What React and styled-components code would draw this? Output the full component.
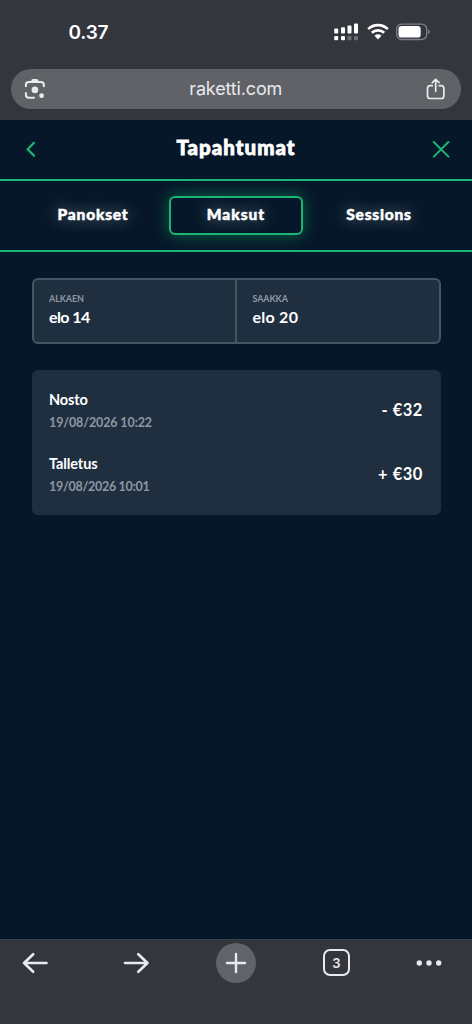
import React from "react";
import styled, { createGlobalStyle } from "styled-components";

const chrome = "#33363d";
const pill = "#606268";
const green = "#1bb673";
const navy = "#061729";
const panel = "#202f3f";
const muted = "#8d98a4";

const GlobalStyle = createGlobalStyle`
  * {
    box-sizing: border-box;
  }
  body {
    margin: 0;
    background: ${navy};
    font-family: Lato, "Noto Sans", sans-serif;
  }
  p, h1 {
    margin: 0;
  }
  button {
    padding: 0;
    border: 0;
    background: none;
    font: inherit;
    color: inherit;
  }
  svg {
    display: block;
  }
`;

const Phone = styled.div`
  display: flex;
  flex-direction: column;
  width: 472px;
  height: 1024px;
  overflow: hidden;
  background: ${navy};
  color: #fff;
`;

const BrowserTop = styled.div`
  height: 120px;
  padding: 0 11px;
  background: ${chrome};
`;

const StatusBar = styled.div`
  display: flex;
  align-items: center;
  height: 69px;
  padding: 0 30px 0 57.5px;
`;

const Clock = styled.span`
  margin-right: auto;
  padding-bottom: 4px;
  line-height: 24px;
  font-family: Inter, sans-serif;
  font-size: 19px;
  font-weight: 600;
  letter-spacing: -0.2px;
`;

const StatusIcons = styled.div`
  display: flex;
  gap: 7.5px;
  padding-bottom: 6px;
`;

const AddressBar = styled.div`
  display: flex;
  align-items: center;
  justify-content: space-between;
  height: 40px;
  padding: 0 15.5px 0 13px;
  border-radius: 20px;
  background: ${pill};
  color: #e8eaee;
`;

const Url = styled.span`
  font-family: Inter, sans-serif;
  font-size: 18px;
  line-height: 24px;
  letter-spacing: -0.15px;
`;

const Header = styled.header`
  display: flex;
  align-items: center;
  justify-content: space-between;
  height: 61px;
  padding: 0 22px 1px;
  border-bottom: 2px solid ${green};
  color: ${green};
`;

const Title = styled.h1`
  padding-bottom: 4px;
  color: #fff;
  font-size: 20.5px;
  font-weight: 900;
  line-height: 24px;
  letter-spacing: 1px;
  -webkit-text-stroke: 0.8px #fff;
`;

const Tabs = styled.nav`
  display: grid;
  grid-template-columns: repeat(3, 134px);
  column-gap: 9px;
  justify-content: center;
  align-items: center;
  height: 70.5px;
  border-bottom: 2px solid ${green};
`;

const Tab = styled.button`
  height: 39px;
  padding-bottom: 2px;
  border: 2px solid ${({ $active }) => ($active ? green : "transparent")};
  border-radius: 6px;
  box-shadow: ${({ $active }) =>
    $active ? "0 0 16px rgba(20, 185, 110, 0.5)" : "none"};
  font-size: 15.5px;
  font-weight: 900;
  line-height: 20px;
  letter-spacing: ${({ $spacing }) => $spacing}px;
  text-shadow: 0 0 15px rgba(255, 255, 255, 0.5);
  -webkit-text-stroke: 0.5px #fff;
`;

const Content = styled.main`
  flex: 1;
  padding: 26.5px 31.5px 0;
`;

const Period = styled.div`
  display: grid;
  grid-template-columns: 203.5px 1fr;
  height: 66px;
  border: 2px solid #465564;
  border-radius: 6px;
  background: ${panel};
`;

const DateField = styled.div`
  padding: 13px 0 0 15.5px;
  border-right: ${({ $end }) => ($end ? "0" : "2px solid #465564")};
  .label {
    color: ${muted};
    font-size: 9px;
    font-weight: 700;
    line-height: 12px;
    letter-spacing: -0.1px;
  }
  .value {
    margin-top: 2px;
    font-size: 16px;
    font-weight: 700;
    line-height: 20px;
    letter-spacing: ${({ $end }) => ($end ? 0.25 : -0.6)}px;
  }
`;

const Payments = styled.div`
  height: 145px;
  margin-top: 26px;
  padding: 19px 18px 0 17.5px;
  border-radius: 6px;
  background: ${panel};
`;

const Payment = styled.div`
  display: flex;
  align-items: center;
  justify-content: space-between;
  height: 43px;
  margin-bottom: 21px;
  .name {
    font-size: 14.5px;
    font-weight: 700;
    line-height: 20px;
    letter-spacing: -0.1px;
  }
  .time {
    margin-top: 4px;
    color: ${muted};
    font-size: 12.5px;
    font-weight: 700;
    line-height: 18px;
    letter-spacing: ${({ $timeSpacing }) => $timeSpacing}px;
  }
  .amount {
    margin-right: -0.4px;
    padding-bottom: 2px;
    font-size: 16.5px;
    font-weight: 700;
    line-height: 20px;
    letter-spacing: 0.5px;
  }
`;

const Toolbar = styled.footer`
  display: grid;
  grid-template-columns: 101px 94px 107px 92.5px 27px;
  align-items: start;
  justify-items: start;
  height: 85px;
  padding: 2.5px 0 0 21px;
  border-top: 1px solid #3c4046;
  background: ${chrome};
  color: #e8eaef;
`;

const ToolButton = styled.button`
  display: flex;
  align-items: center;
  justify-content: center;
  width: ${({ $filled }) => ($filled ? 40 : 27)}px;
  height: 40px;
  border-radius: 20px;
  background: ${({ $filled }) => ($filled ? "#606368" : "none")};
`;

const TabCount = styled.span`
  display: flex;
  align-items: center;
  justify-content: center;
  width: 27px;
  height: 27px;
  border: 2px solid #e8eaef;
  border-radius: 7px;
  font-family: Inter, sans-serif;
  font-size: 13px;
  font-weight: 600;
`;

const SignalIcon = () => (
  <svg width="25" height="18" viewBox="0 0 25 18" fill="#fff">
    <rect x="0.2" y="5.5" width="4" height="5" rx="1" />
    <rect x="7" y="4.2" width="4" height="6.3" rx="1" />
    <rect x="13.5" y="2.4" width="4" height="8.1" rx="1" />
    <rect x="20" y="0.4" width="4" height="10.1" rx="1" />
    <rect x="0.2" y="13" width="4" height="4.2" rx="1" />
    <rect x="7" y="13" width="4" height="4.2" rx="1" />
    <rect x="13.5" y="13" width="4" height="4.2" rx="1" opacity="0.28" />
    <rect x="20" y="13" width="4" height="4.2" rx="1" opacity="0.28" />
  </svg>
);

const WifiIcon = () => (
  <svg width="22" height="18" viewBox="0 0 22 18" fill="none">
    <g stroke="#fff" strokeWidth="2.7">
      <path d="M1.2 6.1C6.6 .9 15.4 .9 20.8 6.1" />
      <path d="M4.8 9.8C8.3 6.6 13.7 6.6 17.2 9.8" />
    </g>
    <path d="M7.5 12.7C9.5 10.9 12.5 10.9 14.5 12.7L11 16.4Z" fill="#fff" />
  </svg>
);

const BatteryIcon = () => (
  <svg width="35" height="18" viewBox="0 0 35 18" fill="none">
    <rect x=".7" y="1.1" width="30" height="15.4" rx="5" stroke="#7e8086" strokeWidth="1.3" />
    <rect x="2.5" y="3" width="22.2" height="11.6" rx="3.2" fill="#fff" />
    <path d="M32.2 6.5C34.4 7.2 34.4 10.4 32.2 11.1Z" fill="#7e8086" />
  </svg>
);

const LensIcon = () => (
  <svg width="22" height="22" viewBox="0 0 22 22" fill="none">
    <g stroke="currentColor" strokeWidth="2">
      <path d="M1.9 9V6.8Q1.9 4 4.7 4H17Q19.8 4 19.8 6.8V9" />
      <path d="M1.9 14.2V16.8Q1.9 19.8 4.9 19.8H10.8" />
    </g>
    <path d="M6.6 4.2L7.6 1.8Q8 1 8.9 1H12.8Q13.6 1 14 1.8L15 4.2Z" fill="currentColor" />
    <circle cx="10.9" cy="11.9" r="3.3" fill="currentColor" />
    <circle cx="17.6" cy="17.7" r="2.4" fill="currentColor" />
  </svg>
);

const ShareIcon = () => (
  <svg width="20" height="22" viewBox="0 0 20 22" fill="none" stroke="currentColor" strokeWidth="1.7" strokeLinecap="round" strokeLinejoin="round">
    <path d="M6.2 7.7H4.3Q1.5 7.7 1.5 10.5V17.7Q1.5 20.5 4.3 20.5H15.1Q17.9 20.5 17.9 17.7V10.5Q17.9 7.7 15.1 7.7H13.2" />
    <path d="M9.7 13.3V1.5M6.3 4.7L9.7 1.3L13.1 4.7" />
  </svg>
);

const BackIcon = () => (
  <svg width="18" height="18" viewBox="0 0 18 18" fill="none" stroke="currentColor" strokeWidth="2.2" strokeLinecap="round" strokeLinejoin="round">
    <path d="M12 2.8L5.6 9.2L12 15.6" />
  </svg>
);

const CloseIcon = () => (
  <svg width="18" height="18" viewBox="0 0 18 18" stroke="currentColor" strokeWidth="2" strokeLinecap="round">
    <path d="M1.8 2L16.4 16.6M16.4 2L1.8 16.6" />
  </svg>
);

const ArrowIcon = ({ right }) => (
  <svg width="26" height="22" viewBox="0 0 26 22" fill="none" stroke="currentColor" strokeWidth="2.6" strokeLinecap="round" strokeLinejoin="round">
    <path d={right ? "M2 11H24.5M15.3 2.2L24.5 11L15.3 19.8" : "M24.5 11H2M11.2 2.2L2 11L11.2 19.8"} />
  </svg>
);

const PlusIcon = () => (
  <svg width="22" height="22" viewBox="0 0 22 22" stroke="currentColor" strokeWidth="2.4" strokeLinecap="round">
    <path d="M11 2V20M2 11H20" />
  </svg>
);

const MoreIcon = () => (
  <svg width="26" height="8" viewBox="0 0 26 8" fill="currentColor">
    <circle cx="3.3" cy="4" r="2.7" />
    <circle cx="13" cy="4" r="2.7" />
    <circle cx="22.7" cy="4" r="2.7" />
  </svg>
);

const tabs = [
  { name: "Panokset", spacing: 0.8 },
  { name: "Maksut", spacing: 1, active: true },
  { name: "Sessions", spacing: 0.8 },
];

const payments = [
  { name: "Nosto", time: "19/08/2026 10:22", amount: "- €32", timeSpacing: -0.12 },
  { name: "Talletus", time: "19/08/2026 10:01", amount: "+ €30", timeSpacing: -0.28 },
];

export default () => (
  <Phone>
    <GlobalStyle />
    <BrowserTop>
      <StatusBar>
        <Clock>0.37</Clock>
        <StatusIcons>
          <SignalIcon />
          <WifiIcon />
          <BatteryIcon />
        </StatusIcons>
      </StatusBar>
      <AddressBar>
        <LensIcon />
        <Url>raketti.com</Url>
        <ShareIcon />
      </AddressBar>
    </BrowserTop>
    <Header>
      <BackIcon />
      <Title>Tapahtumat</Title>
      <CloseIcon />
    </Header>
    <Tabs>
      {tabs.map(tab => (
        <Tab key={tab.name} $active={tab.active} $spacing={tab.spacing}>
          {tab.name}
        </Tab>
      ))}
    </Tabs>
    <Content>
      <Period>
        <DateField>
          <p className="label">ALKAEN</p>
          <p className="value">elo 14</p>
        </DateField>
        <DateField $end>
          <p className="label">SAAKKA</p>
          <p className="value">elo 20</p>
        </DateField>
      </Period>
      <Payments>
        {payments.map(payment => (
          <Payment key={payment.time} $timeSpacing={payment.timeSpacing}>
            <div>
              <p className="name">{payment.name}</p>
              <p className="time">{payment.time}</p>
            </div>
            <p className="amount">{payment.amount}</p>
          </Payment>
        ))}
      </Payments>
    </Content>
    <Toolbar>
      <ToolButton>
        <ArrowIcon />
      </ToolButton>
      <ToolButton>
        <ArrowIcon right />
      </ToolButton>
      <ToolButton $filled>
        <PlusIcon />
      </ToolButton>
      <ToolButton>
        <TabCount>3</TabCount>
      </ToolButton>
      <ToolButton>
        <MoreIcon />
      </ToolButton>
    </Toolbar>
  </Phone>
);
